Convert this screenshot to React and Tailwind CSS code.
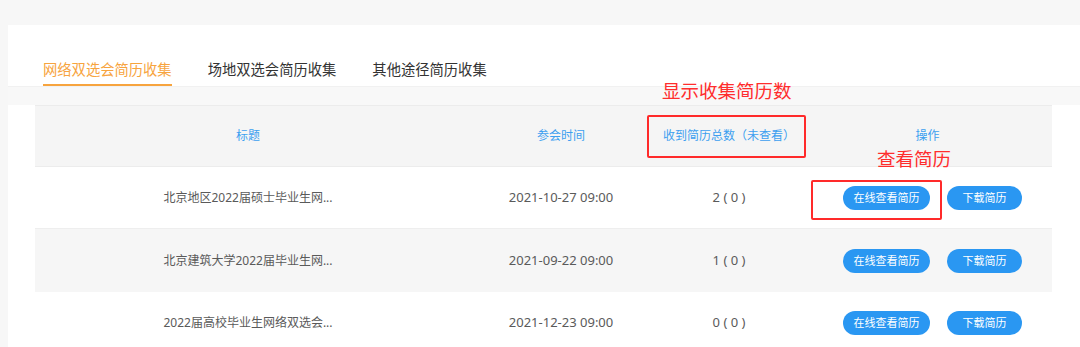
import React from "react";

const FONT = { fontFamily: '"Noto Sans", "Noto Sans CJK SC", sans-serif' };

const ResumeList = () => {
    const tabs = ["网络双选会简历收集", "场地双选会简历收集", "其他途径简历收集"];

    const rows = [
        { title: "北京地区2022届硕士毕业生网...", time: "2021-10-27 09:00", total: 2, unread: 0 },
        { title: "北京建筑大学2022届毕业生网...", time: "2021-09-22 09:00", total: 1, unread: 0 },
        { title: "2022届高校毕业生网络双选会...", time: "2021-12-23 09:00", total: 0, unread: 0 },
    ];

    return (
        <div
            className="relative w-[1080px] h-[347px] overflow-hidden bg-[#f7f7f7] pt-[25px] pl-[8px]"
            style={FONT}
        >
            <div className="bg-white w-[1080px] h-[330px]">
                {/* tabs */}
                <div className="flex items-end gap-[36px] pl-[35px] h-[61px]">
                    {tabs.map((tab, idx) => (
                        <div
                            key={idx}
                            className={
                                idx === 0
                                    ? "text-[14.3px] leading-[20px] pb-[4px] border-b-2 border-[#f7a43e] text-[#f7a43e]"
                                    : "text-[14.3px] leading-[20px] pb-[4px] border-b-2 border-transparent text-[#333333]"
                            }
                        >
                            {tab}
                        </div>
                    ))}
                </div>
                <div className="h-[19px] bg-[#f8f8f8] border-t border-[#f1f1f1]"></div>

                {/* table */}
                <div className="pl-[27px]">
                    <div className="w-[1017px]">
                        <div className="grid grid-cols-[426px_200px_136px_255px] h-[62px] items-center bg-[#f5f5f5] border-t border-b border-[#ececec] text-[12px] text-[#3d9ff0]">
                            <div className="text-center">标题</div>
                            <div className="text-center">参会时间</div>
                            <div className="flex justify-center whitespace-nowrap">收到简历总数（未查看）</div>
                            <div className="text-center pl-[6px]">操作</div>
                        </div>
                        {rows.map((row, idx) => (
                            <div
                                key={idx}
                                className={
                                    idx === 1
                                        ? "grid grid-cols-[426px_200px_136px_255px] h-[63px] items-center bg-[#f6f6f6]"
                                        : "grid grid-cols-[426px_200px_136px_255px] h-[62px] items-center bg-white border-b border-[#eeeeee]"
                                }
                            >
                                <div className="text-center text-[12px] text-[#5a5a5a] whitespace-nowrap">
                                    {row.title}
                                </div>
                                <div className="text-center text-[13px] text-[#5a5a5a]">{row.time}</div>
                                <div className="text-center text-[13px] text-[#5a5a5a] whitespace-pre">
                                    {`${row.total} ( ${row.unread} )`}
                                </div>
                                <div className="flex items-center gap-[17px] pl-[46px]">
                                    <button className="w-[87px] h-[24px] rounded-full bg-[#2a97f2] text-white text-[11px] leading-none">
                                        在线查看简历
                                    </button>
                                    <button className="w-[75px] h-[24px] rounded-full bg-[#2a97f2] text-white text-[11px] leading-none">
                                        下载简历
                                    </button>
                                </div>
                            </div>
                        ))}
                    </div>
                </div>
            </div>

            {/* red annotations drawn over the screenshot */}
            <div className="absolute left-[662px] top-[79px] text-[18.5px] leading-[24px] text-[#ff2d2d] whitespace-nowrap">
                显示收集简历数
            </div>
            <div className="absolute left-[647px] top-[115px] w-[159px] h-[43px] border-2 border-[#ff2a2a] rounded-[2px]"></div>
            <div className="absolute left-[877px] top-[147px] text-[18.5px] leading-[24px] text-[#ff2d2d] whitespace-nowrap">
                查看简历
            </div>
            <div className="absolute left-[811px] top-[180px] w-[131px] h-[40px] border-2 border-[#ff2a2a] rounded-[2px]"></div>
        </div>
    );
};

export default ResumeList;
